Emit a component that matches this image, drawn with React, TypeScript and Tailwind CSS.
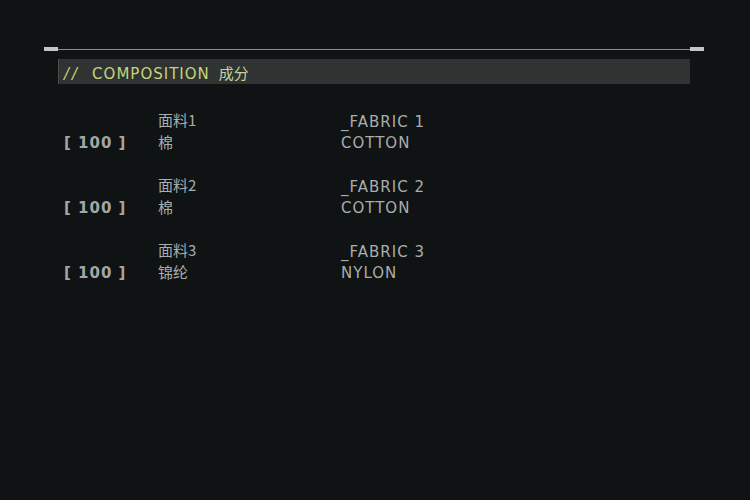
const rows = [
  { qty: "100", label: "面料1", material: "棉", en: "_FABRIC 1", enMat: "COTTON" },
  { qty: "100", label: "面料2", material: "棉", en: "_FABRIC 2", enMat: "COTTON" },
  { qty: "100", label: "面料3", material: "锦纶", en: "_FABRIC 3", enMat: "NYLON" },
];

const tech = { fontFamily: '"DejaVu Sans", "Noto Sans CJK SC", sans-serif' };
const cjk = { fontFamily: '"Noto Sans CJK SC", sans-serif' };

export default function App() {
  return (
    <div className="w-[750px] h-[500px] bg-[#0f1314] pt-[47px] px-[46px] overflow-hidden">
      <div className="flex items-center h-[4px] -ml-[2px]">
        <div className="w-[14px] h-[4px] bg-[#c4c6c5]" />
        <div className="flex-1 h-px bg-[#8a8d8c]" />
        <div className="w-[14px] h-[4px] bg-[#c4c6c5]" />
      </div>

      <div
        className="mt-[8px] ml-[12px] mr-[14px] h-[25px] bg-[#2f3433] border-l border-[#4a4f4d] pt-[3px] pl-[5px] text-[15px] leading-[22px] whitespace-nowrap text-[#c6d37c]"
        style={tech}
      >
        <span className="tracking-[3px] italic mr-[12px]">//</span>
        <span className="tracking-[1px] mr-[9px]">COMPOSITION</span>
        <span className="text-[#c9d19a]" style={cjk}>
          成分
        </span>
      </div>

      <div className="mt-[25px] ml-[18px] flex flex-col gap-[20px]">
        {rows.map((r) => (
          <div key={r.en} className="flex text-[#a9adab]">
            <div className="w-[94px] flex flex-col pt-[2px]">
              <div className="h-[22px]" />
              <div
                className="h-[21px] flex items-center text-[15px] font-bold tracking-[1px] whitespace-pre text-[#a3a7a5]"
                style={tech}
              >
                {`[ ${r.qty} ]`}
              </div>
            </div>
            <div className="w-[183px] flex flex-col text-[15px]" style={cjk}>
              <div className="h-[22px] leading-[22px]">{r.label}</div>
              <div className="h-[22px] leading-[22px]">{r.material}</div>
            </div>
            <div className="flex flex-col text-[15px] tracking-[1px] pt-[3px]" style={tech}>
              <div className="h-[21px] flex items-center">{r.en}</div>
              <div className="h-[21px] flex items-center">{r.enMat}</div>
            </div>
          </div>
        ))}
      </div>
    </div>
  );
}
